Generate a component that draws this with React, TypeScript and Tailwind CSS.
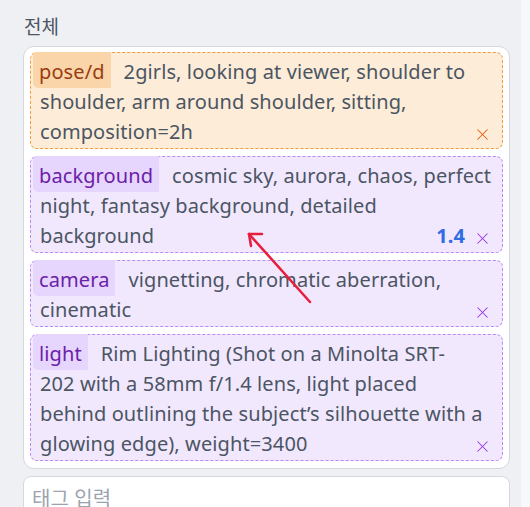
import { X } from 'lucide-react';

type Tag = {
  label: string;
  text: string;
  weight?: string;
  tone: 'orange' | 'purple';
};

// line breaks kept where the list wraps them
const TAGS: Tag[] = [
  {
    label: 'pose/d',
    text: '2girls, looking at viewer, shoulder to\nshoulder, arm around shoulder, sitting,\ncomposition=2h',
    tone: 'orange',
  },
  {
    label: 'background',
    text: 'cosmic sky, aurora, chaos, perfect\nnight, fantasy background, detailed\nbackground',
    weight: '1.4',
    tone: 'purple',
  },
  { label: 'camera', text: 'vignetting, chromatic aberration,\ncinematic', tone: 'purple' },
  {
    label: 'light',
    text: 'Rim Lighting (Shot on a Minolta SRT-\n202 with a 58mm f/1.4 lens, light placed\nbehind outlining the subject’s silhouette with a\nglowing edge), weight=3400',
    tone: 'purple',
  },
];

const TONES = {
  orange: {
    box: 'bg-[#fdecd7] border-[#f59a3c]',
    chip: 'bg-[#f9d5a9] text-[#9a3c12]',
    x: 'text-[#ea580c]',
  },
  purple: {
    box: 'bg-[#f1e8fe] border-[#b98af6]',
    chip: 'bg-[#e6d6fd] text-[#6b21a8]',
    x: 'text-[#9333ea]',
  },
};

function TagRow({ tag }: { tag: Tag }) {
  const t = TONES[tag.tone];
  return (
    <div className={`border border-dashed rounded-[7px] pl-[9px] pr-[5px] pt-[4px] pb-[1px] leading-[30px] ${t.box}`}>
      <span className={`-ml-[7px] mr-[13px] pl-[6px] pr-[6px] pt-[6px] pb-[3px] rounded-l-[5px] ${t.chip}`}>{tag.label}</span>
      <span className="text-[#4b5563] whitespace-pre-line">{tag.text}</span>
      <span className="float-right flex items-center h-[30px] ml-2 pr-[5px] pt-[4px]">
        {tag.weight && <span className="font-bold text-[#2f6ce5] mr-[8px] -mt-[4px]">{tag.weight}</span>}
        <X size={19} strokeWidth={1.3} className={t.x} />
      </span>
    </div>
  );
}

export default function App() {
  return (
    <div className="relative flex h-[507px] overflow-hidden bg-[#eef0f3] font-['Noto_Sans','Noto_Sans_CJK_KR',sans-serif] text-[20px] tracking-[0.1px]">
      <div className="flex-1 pl-[23px] pr-[11px] pt-[12px]">
        <div className="text-[#4b5563] leading-[30px] pl-[1px] mb-[4px] text-[19px]">전체</div>
        <div className="bg-white border border-[#d5d8de] rounded-[11px] px-[6px] pt-[5px] pb-[7px] flex flex-col gap-[7px]">
          {TAGS.map((tag) => (
            <TagRow key={tag.label} tag={tag} />
          ))}
        </div>
        <div className="mt-[7px] bg-white border border-[#d5d8de] rounded-[8px] h-[60px] px-[8px] pt-[7px] text-[#9ca3af] leading-[30px]">
          태그 입력
        </div>
      </div>
      <div className="w-[9px] bg-[#f7f8fa]" />
      <svg className="absolute left-0 top-0 pointer-events-none" width="530" height="507">
        <g stroke="#e81d3d" strokeWidth="2.5" strokeLinecap="round" fill="none">
          <line x1="310" y1="302" x2="249" y2="234" />
          <line x1="249" y1="234" x2="262" y2="234" />
          <line x1="249" y1="234" x2="251" y2="246" />
        </g>
      </svg>
    </div>
  );
}
